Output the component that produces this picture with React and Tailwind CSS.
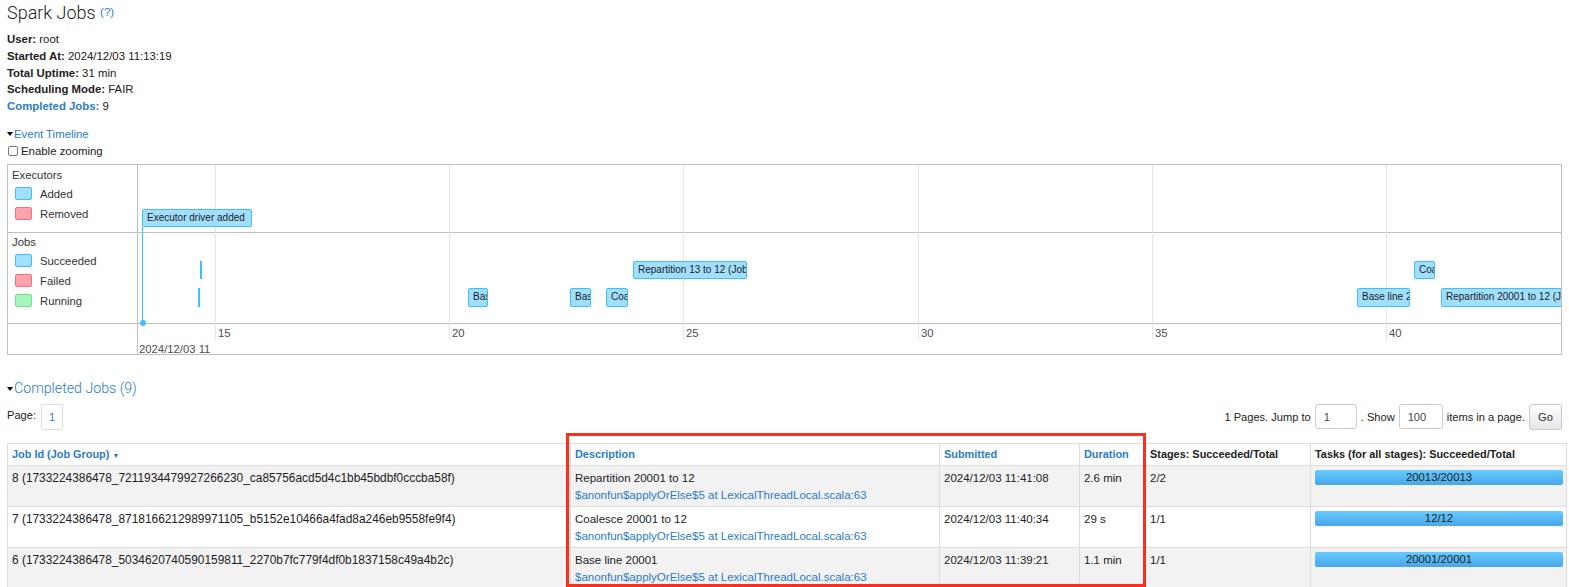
import React from 'react'

const LINK = 'text-[#2a7bc9]'

const gridLines = [
  { x: 77, label: '15' },
  { x: 311, label: '20' },
  { x: 545, label: '25' },
  { x: 780, label: '30' },
  { x: 1014, label: '35' },
  { x: 1248, label: '40' },
]

// job items on the timeline canvas (left/top relative to the plot area)
const jobItems = [
  { left: 330, top: 123, w: 20, h: 19, text: 'Base line 20001 (Job 0)' },
  { left: 432, top: 123, w: 21, h: 19, text: 'Base line 20001 (Job 1)' },
  { left: 468, top: 123, w: 22, h: 19, text: 'Coalesce 20001 to 12 (Job 2)' },
  { left: 495, top: 96, w: 114, h: 18, text: 'Repartition 13 to 12 (Job 3)' },
  { left: 1219, top: 123, w: 53, h: 19, text: 'Base line 20001 (Job 6)' },
  { left: 1276, top: 96, w: 21, h: 18, text: 'Coalesce 20001 to 12 (Job 7)' },
  { left: 1303, top: 123, w: 121, h: 19, text: 'Repartition 20001 to 12 (Job 8)' },
]

const jobs = [
  {
    id: '8 (1733224386478_7211934479927266230_ca85756acd5d4c1bb45bdbf0cccba58f)',
    desc: 'Repartition 20001 to 12',
    submitted: '2024/12/03 11:41:08',
    duration: '2.6 min',
    stages: '2/2',
    tasks: '20013/20013',
  },
  {
    id: '7 (1733224386478_8718166212989971105_b5152e10466a4fad8a246eb9558fe9f4)',
    desc: 'Coalesce 20001 to 12',
    submitted: '2024/12/03 11:40:34',
    duration: '29 s',
    stages: '1/1',
    tasks: '12/12',
  },
  {
    id: '6 (1733224386478_5034620740590159811_2270b7fc779f4df0b1837158c49a4b2c)',
    desc: 'Base line 20001',
    submitted: '2024/12/03 11:39:21',
    duration: '1.1 min',
    stages: '1/1',
    tasks: '20001/20001',
  },
]

function Triangle() {
  return (
    <span className="inline-block w-0 h-0 border-l-[3.5px] border-r-[3.5px] border-t-[4px] border-l-transparent border-r-transparent border-t-black mr-[1px] align-middle" />
  )
}

function Swatch({ kind }) {
  const cls =
    kind === 'blue'
      ? 'bg-[#a0dfff] border-[#3ec0ff]'
      : kind === 'red'
        ? 'bg-[#ffa3ae] border-[#ff6b82]'
        : 'bg-[#a6f5bc] border-[#6ee28e]'
  return <span className={`inline-block w-[17px] h-[13px] rounded-[2px] border ${cls}`} />
}

function LegendItem({ kind, label }) {
  return (
    <div className="flex items-center h-[20px] pl-[7px] gap-[8px]">
      <Swatch kind={kind} />
      <span>{label}</span>
    </div>
  )
}

function Timeline() {
  return (
    <div className="relative mt-[4px] border border-[#bfbfbf] text-[11.3px] text-[#333] leading-[14px]">
      <div className="flex h-[68px] border-b border-[#bfbfbf]">
        <div className="w-[130px] border-r border-[#bfbfbf] pt-[3px] pl-[4px]">
          <div>Executors</div>
          <div className="-ml-[4px] mt-[2px]">
            <LegendItem kind="blue" label="Added" />
            <LegendItem kind="red" label="Removed" />
          </div>
        </div>
        <div className="flex-1" />
      </div>
      <div className="flex h-[91px] border-b border-[#bfbfbf]">
        <div className="w-[130px] border-r border-[#bfbfbf] pt-[2px] pl-[4px]">
          <div>Jobs</div>
          <div className="-ml-[4px] mt-[2px]">
            <LegendItem kind="blue" label="Succeeded" />
            <LegendItem kind="red" label="Failed" />
            <LegendItem kind="green" label="Running" />
          </div>
        </div>
        <div className="flex-1" />
      </div>
      <div className="flex h-[30px]">
        <div className="w-[130px] border-r border-[#bfbfbf]" />
        <div className="flex-1" />
      </div>

      {/* plot canvas */}
      <div className="absolute left-[130px] top-0 right-0 bottom-0 overflow-hidden">
        {gridLines.map((g) => (
          <React.Fragment key={g.x}>
            <div className="absolute top-0 h-[175px] w-px bg-[#e5e5e5]" style={{ left: g.x }} />
            <div className="absolute top-[161px] text-[#4d4d4d]" style={{ left: g.x + 3 }}>
              {g.label}
            </div>
          </React.Fragment>
        ))}
        <div className="absolute left-[1px] top-[177px] text-[#4d4d4d]">2024/12/03 11</div>

        {/* executor added */}
        <div className="absolute left-[4px] top-[62px] w-px h-[96px] bg-[#3ec0ff]" />
        <div className="absolute left-[1.5px] top-[155px] w-[6px] h-[6px] rounded-full bg-[#3ec0ff]" />
        <div className="absolute left-[4px] top-[44px] w-[110px] h-[18px] bg-[#a0dfff] border border-[#3ec0ff] rounded-[2px] text-[10px] leading-[16px] pl-[4px] whitespace-nowrap overflow-hidden text-[#222]">
          Executor driver added
        </div>

        {/* very short jobs */}
        <div className="absolute left-[62px] top-[96px] w-[2px] h-[18px] bg-[#3ec0ff]" />
        <div className="absolute left-[60px] top-[123px] w-[2px] h-[19px] bg-[#3ec0ff]" />

        {jobItems.map((j, i) => (
          <div
            key={i}
            className="absolute bg-[#a0dfff] border border-[#3ec0ff] rounded-[2px] text-[10px] pl-[4px] whitespace-nowrap overflow-hidden text-[#222] flex items-center"
            style={{ left: j.left, top: j.top, width: j.w, height: j.h }}
          >
            {j.text}
          </div>
        ))}
      </div>
    </div>
  )
}

function App() {
  return (
    <div className="relative w-[1569px] h-[587px] overflow-hidden bg-white px-[7px] font-['Liberation_Sans',Arial,sans-serif] text-[#212121]">
      <h3 className="h-[26px] leading-[26px] text-[18px] font-light font-['Roboto',sans-serif] text-[#222]">
        Spark Jobs{' '}
        <sup className={`${LINK} text-[11.5px] font-['Liberation_Sans',sans-serif] relative -top-[3px]`}>(?)</sup>
      </h3>

      <ul className="mt-[5px] text-[11.4px] leading-[16.75px]">
        <li>
          <strong>User:</strong> root
        </li>
        <li>
          <strong>Started At:</strong> 2024/12/03 11:13:19
        </li>
        <li>
          <strong>Total Uptime:</strong> 31 min
        </li>
        <li>
          <strong>Scheduling Mode:</strong> FAIR
        </li>
        <li>
          <strong className={LINK}>Completed Jobs:</strong> 9
        </li>
      </ul>

      <div className="mt-[11px] text-[11.4px] leading-[17px]">
        <div className="flex items-center">
          <Triangle />
          <span className={LINK}>Event Timeline</span>
        </div>
        <div className="flex items-center gap-[3px] pl-[1px]">
          <span className="inline-block w-[10px] h-[10px] border border-[#767676] rounded-[2px] bg-white" />
          <span>Enable zooming</span>
        </div>
      </div>

      <Timeline />

      <div className="mt-[25px] flex items-center h-[18px]">
        <Triangle />
        <span className={`${LINK} text-[14.2px] font-light font-['Roboto',sans-serif]`}>Completed Jobs (9)</span>
      </div>

      <div className="mt-[6px] flex items-start justify-between text-[11.1px] leading-[14px]">
        <div className="flex items-start gap-[5px]">
          <span className="mt-[4px]">Page:</span>
          <span className={`w-[22px] h-[26px] border border-[#dddddd] rounded-[2px] flex items-center justify-center ${LINK}`}>
            1
          </span>
        </div>
        <div className="flex items-center gap-[4px] h-[26px]">
          <span>1 Pages. Jump to</span>
          <span className="w-[42px] h-[25px] border border-[#cccccc] rounded-[3px] pl-[8px] flex items-center text-[#444]">1</span>
          <span>. Show</span>
          <span className="w-[44px] h-[25px] border border-[#cccccc] rounded-[3px] pl-[8px] flex items-center text-[#444]">100</span>
          <span>items in a page.</span>
          <span className="w-[33px] h-[26px] border border-[#c8c8c8] rounded-[3px] bg-gradient-to-b from-white to-[#e6e6e6] flex items-center justify-center text-[#333]">
            Go
          </span>
        </div>
      </div>

      <table className="mt-[13px] w-[1559px] border-collapse table-fixed text-[11.5px] leading-[16px]">
        <colgroup>
          <col className="w-[563px]" />
          <col className="w-[369px]" />
          <col className="w-[140px]" />
          <col className="w-[66px]" />
          <col className="w-[165px]" />
          <col className="w-[256px]" />
        </colgroup>
        <thead>
          <tr className="text-[10.9px] font-bold leading-[13px] text-left">
            <th className={`border border-[#dddddd] px-[4px] py-[4px] ${LINK}`}>
              Job Id (Job Group) <span className="text-[7px] align-middle">▼</span>
            </th>
            <th className={`border border-[#dddddd] px-[4px] py-[4px] ${LINK}`}>Description</th>
            <th className={`border border-[#dddddd] px-[4px] py-[4px] ${LINK}`}>Submitted</th>
            <th className={`border border-[#dddddd] px-[4px] py-[4px] ${LINK}`}>Duration</th>
            <th className="border border-[#dddddd] px-[4px] py-[4px]">Stages: Succeeded/Total</th>
            <th className="border border-[#dddddd] px-[4px] py-[4px]">Tasks (for all stages): Succeeded/Total</th>
          </tr>
        </thead>
        <tbody>
          {jobs.map((j, i) => (
            <tr key={j.id} className={i % 2 === 0 ? 'bg-[#f2f2f2]' : 'bg-white'}>
              <td className="border border-[#dddddd] px-[4px] pt-[4px] pb-[3px] align-top whitespace-nowrap text-[11.9px]">
                {j.id}
              </td>
              <td className="border border-[#dddddd] px-[4px] pt-[4px] pb-[3px] align-top whitespace-nowrap">
                <div>{j.desc}</div>
                <div className={`${LINK} mt-[1px]`}>$anonfun$applyOrElse$5 at LexicalThreadLocal.scala:63</div>
              </td>
              <td className="border border-[#dddddd] px-[4px] pt-[4px] pb-[3px] align-top">{j.submitted}</td>
              <td className="border border-[#dddddd] px-[4px] pt-[4px] pb-[3px] align-top">{j.duration}</td>
              <td className="border border-[#dddddd] px-[4px] pt-[4px] pb-[3px] align-top">{j.stages}</td>
              <td className="border border-[#dddddd] pl-[4px] pr-[3px] pt-[4px] pb-[3px] align-top">
                <div className="h-[15px] rounded-[2px] bg-gradient-to-b from-[#66cbff] to-[#48a6ea] text-center text-[11.3px] leading-[15px] text-[#222]">
                  {j.tasks}
                </div>
              </td>
            </tr>
          ))}
        </tbody>
      </table>

      {/* red highlight annotation */}
      <div className="absolute left-[566px] top-[433px] w-[580px] h-[154px] border-[3px] border-[#ff2d1a] pointer-events-none" />
    </div>
  )
}

export default App
